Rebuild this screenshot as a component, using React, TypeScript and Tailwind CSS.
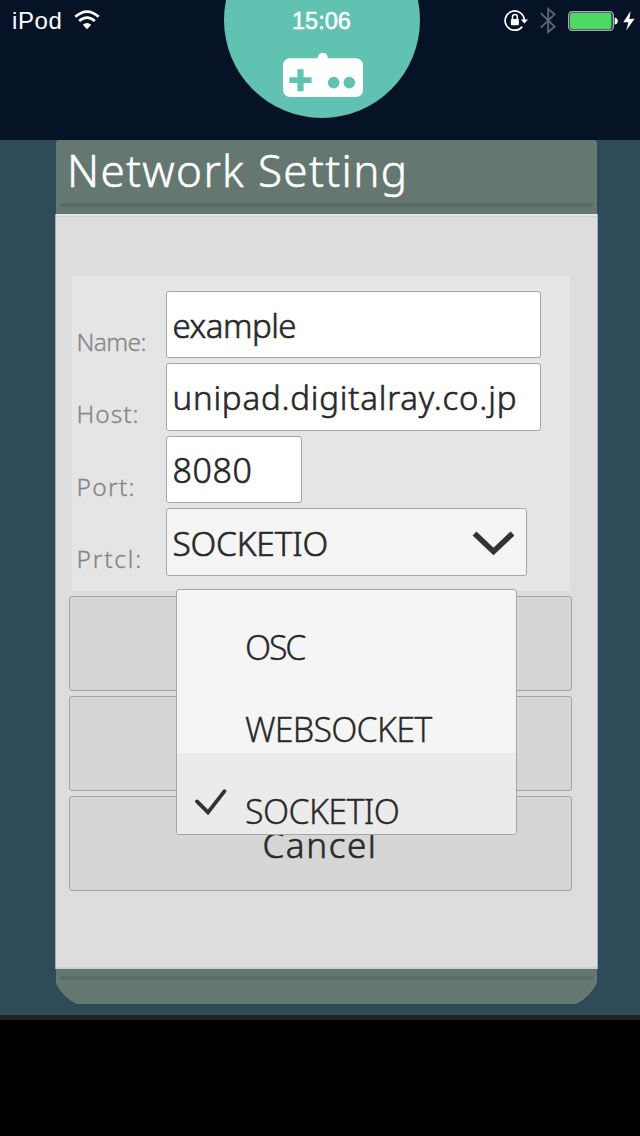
import type { ReactNode } from "react";

function WifiIcon() {
  return (
    <svg className="ml-[12px] mt-[10px] h-5 w-[26px]" viewBox="0 0 26 20" fill="none" stroke="#fff">
      <path d="M1.3 6.8Q13 -3.6 24.7 6.8" strokeWidth="2.8" />
      <path d="M5.2 11Q13 4.3 20.8 11" strokeWidth="2.8" />
      <path d="M8.8 14.8Q13 11.2 17.2 14.8L13 19.3Z" fill="#fff" stroke="none" />
    </svg>
  );
}

function LockRotationIcon() {
  return (
    <svg className="h-6 w-6" viewBox="0 0 24 24" fill="none" stroke="#fff">
      <path d="M20.3 11A9.6 9.6 0 1 0 18.2 17.6" strokeWidth="1.7" />
      <path d="M16.8 10.4H24L20.4 14.4Z" fill="#fff" stroke="none" />
      <rect x="6.9" y="9.9" width="8" height="6.4" rx="0.8" fill="#fff" stroke="none" />
      <path d="M8.5 10.4V7.8a2.4 2.4 0 0 1 4.8 0v2.6" strokeWidth="1.5" />
    </svg>
  );
}

function BluetoothIcon() {
  return (
    <svg className="ml-3 h-[27px] w-4" viewBox="0 0 16 27" fill="none" stroke="#606876" strokeWidth="1.8">
      <path d="M0.8 6.2L14.6 19.6L8.2 25V2L14.6 7.4L0.8 20.6" />
    </svg>
  );
}

function BatteryIcon() {
  return (
    <svg className="ml-3 h-5 w-[50px]" viewBox="0 0 50 20">
      <rect x="0.7" y="0.7" width="44.6" height="18.6" rx="3.6" fill="#0b1526" stroke="#aaa8b2" strokeWidth="1.4" />
      <rect x="2" y="2" width="41.5" height="16" rx="2" fill="#4cd964" />
      <path d="M46.6 6.4Q49.8 7 49.8 10T46.6 13.6Z" fill="#fff" />
    </svg>
  );
}

function BoltIcon() {
  return (
    <svg className="ml-[5px] h-5 w-3" viewBox="0 0 12 20" fill="#fff">
      <path d="M7.6 0L0.3 11.2L5.4 11.2L3.2 19.6L11.6 7.8L6.4 8Z" />
    </svg>
  );
}

function GamepadIcon() {
  return (
    <svg className="ml-[2px] h-[46px] w-20" viewBox="0 0 80 46">
      <path d="M7 6.3H34.5Q35.3 1 40 1T44.7 6.3H73A7 7 0 0 1 80 13.3V38A7 7 0 0 1 73 45H7A7 7 0 0 1 0 38V13.3A7 7 0 0 1 7 6.3Z" fill="#fff" />
      <path d="M14.4 17.3h6.2v8h8v5.8h-8v8.2h-6.2v-8.2h-8v-5.8h8z" fill="#62c2b2" />
      <circle cx="50.7" cy="30.6" r="5.8" fill="#62c2b2" />
      <circle cx="66.3" cy="30.6" r="5.8" fill="#62c2b2" />
    </svg>
  );
}

function Row({ label, tracking, children }: { label: string; tracking: string; children: ReactNode }) {
  return (
    <div className="flex h-[67.5px]">
      <label
        className={`w-[94px] shrink-0 pl-[5px] pt-[34px] text-[24.5px] leading-[34px] text-[#858585] [-webkit-text-stroke:0.3px_#858585] ${tracking}`}
      >
        {label}
      </label>
      {children}
    </div>
  );
}

const box =
  "flex h-full items-center rounded-[3px] border border-[#a6a6a6] pl-[6px] pt-[2px] text-[#292929] [-webkit-text-stroke:0.6px_#292929]";

const action = "h-[95.5px] w-[503px] rounded-[3px] border border-[#a3a3a3] bg-[#d6d6d6]";

function Option({ children, tracking, checked }: { children: ReactNode; tracking: string; checked?: boolean }) {
  return (
    <li className="flex h-[82px] shrink-0 items-end pb-[2px] pl-[14px]">
      <span className="flex h-[46px] w-[54px] shrink-0">
        {checked && (
          <svg className="ml-[4px] h-[27px] w-8" viewBox="0 0 32 27" fill="none" stroke="#333" strokeWidth="3.8" strokeLinecap="round">
            <path d="M2 13.4L13 24.4L29.5 3.2" strokeLinejoin="miter" />
          </svg>
        )}
      </span>
      <span className={`leading-[46px] ${tracking}`}>{children}</span>
    </li>
  );
}

export default function App() {
  return (
    <div className="h-[1136px] w-[640px] overflow-hidden bg-black font-['Noto_Sans','Noto_Sans_CJK_JP',sans-serif] font-light">
      <header className="relative flex h-[139.5px] justify-between overflow-hidden bg-[#061326] font-['Liberation_Sans',Arial,sans-serif] text-white">
        <div className="absolute left-[224px] top-[-78px] flex h-[196px] w-[196px] justify-center rounded-full bg-[#62c2b2] pt-[130px]">
          <GamepadIcon />
        </div>
        <div className="flex">
          <span className="pl-[12px] pt-[6px] text-[24px] leading-[30px] tracking-[0.6px]">iPod</span>
          <WifiIcon />
        </div>
        <span className="absolute left-[292px] top-[6px] text-[23.5px] leading-[30px] [-webkit-text-stroke:0.5px_#fff]">15:06</span>
        <div className="flex h-[41px] items-center pr-[5px]">
          <LockRotationIcon />
          <BluetoothIcon />
          <BatteryIcon />
          <BoltIcon />
        </div>
      </header>

      <main className="h-[875.5px] bg-[#2f4b59] pl-[55.5px]">
        <section className="w-[541.5px]">
          <div className="h-[74.5px] rounded-t-[3px] bg-[#647871] px-[4.5px]">
            <h1 className="h-[63.5px] whitespace-nowrap pl-[7px] text-[44px] leading-[60px] tracking-[1.35px] text-white [-webkit-text-stroke:0.5px_#fff]">
              Network Setting
            </h1>
            <div className="h-[3.5px] bg-[#5b6b66]" />
          </div>

          <div className="-mx-px h-[755px] border-x border-[#a1abb0] bg-[#ddd]">
            <div className="flex h-full flex-col border-b-2 border-t-2 border-b-[#cbd0ce] border-t-[#e4e4e4] pl-[13px]">
              <div className="-ml-[13px] h-px shrink-0 bg-[#cdcdcd]" />
              <form className="ml-[3px] mt-[59px] flex h-[315px] w-[498px] shrink-0 flex-col gap-[5px] bg-[#e5e5e5] pt-[14.5px]">
                <Row label="Name:" tracking="tracking-[-0.6px]">
                  <div className={`${box} w-[375.5px] bg-white text-[33px] tracking-[-0.5px]`}>example</div>
                </Row>
                <Row label="Host:" tracking="tracking-[1px]">
                  <div className={`${box} w-[375.5px] bg-white text-[33px] tracking-[0.78px]`}>unipad.digitalray.co.jp</div>
                </Row>
                <Row label="Port:" tracking="tracking-[1.3px]">
                  <div className={`${box} w-[136px] bg-white text-[34px] tracking-[0.6px]`}>8080</div>
                </Row>
                <Row label="Prtcl:" tracking="tracking-[1.8px]">
                  <div className={`${box} relative w-[361.5px] bg-[#f5f5f5] text-[33.5px] tracking-[-0.2px]`}>
                    <span className="grow">SOCKETIO</span>
                    <svg className="mr-3 h-[26px] w-[42px]" viewBox="0 0 42 26" fill="none" stroke="#333" strokeWidth="5.6">
                      <path d="M2.5 3.5L21.5 21.5L40.5 3.5" />
                    </svg>
                    <ul className="absolute left-[9.5px] top-[80px] z-10 flex h-[245.5px] w-[341px] flex-col overflow-hidden rounded-[3px] border border-[#a6a6a6] bg-[#f5f5f5] text-[34px] [-webkit-text-stroke:0.3px_#292929]">
                      <Option tracking="tracking-[-2.2px]">OSC</Option>
                      <Option tracking="tracking-[-0.8px]">WEBSOCKET</Option>
                      <div className="-mt-px shrink-0 bg-[#ebebeb] pt-px">
                        <Option tracking="tracking-[-0.65px]" checked>SOCKETIO</Option>
                      </div>
                    </ul>
                  </div>
                </Row>
              </form>
              <div className="mt-[4.5px] flex flex-col gap-[4.5px]">
                <button className={action} />
                <button className={action} />
                <button className={`${action} pt-[3px] text-[35px] leading-[46px] tracking-[1.6px] text-[#292929] [-webkit-text-stroke:0.6px_#292929]`}>
                  Cancel
                </button>
              </div>
            </div>
          </div>

          <footer className="h-[35px] bg-[#647871] px-[4.5px] pt-[7px] [clip-path:path('M0_0H541.5V14Q533.5_29_520.5_35H21Q8_29_0_14Z')]">
            <div className="h-[3.5px] bg-[#5b6b66]" />
          </footer>
        </section>
      </main>
      <div className="h-[5px] bg-[#222]" />
    </div>
  );
}
